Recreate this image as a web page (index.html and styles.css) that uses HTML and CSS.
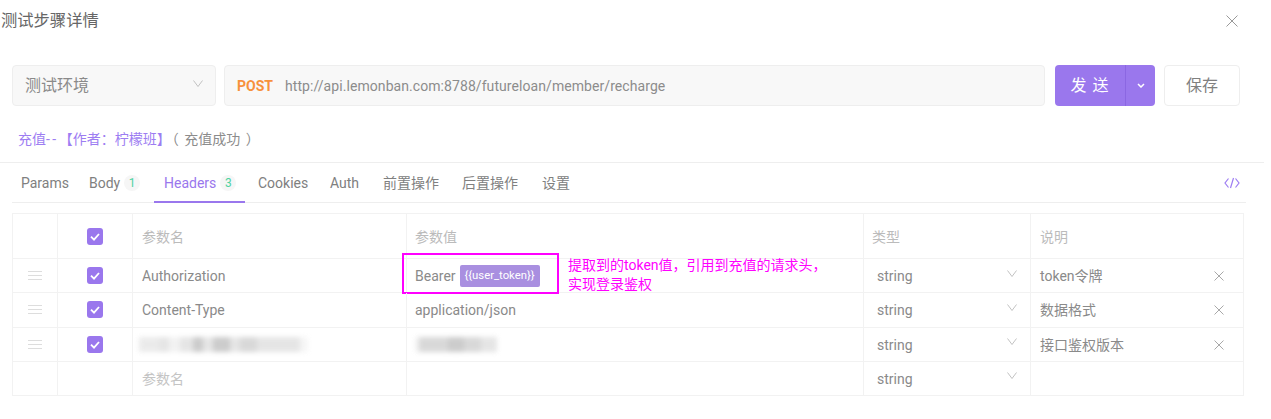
FILE: index.html
```html
<!DOCTYPE html>
<html lang="zh">
<head>
<meta charset="utf-8">
<title>测试步骤详情</title>
<link rel="stylesheet" href="styles.css">
</head>
<body>
<header class="title-bar">
  <h1 class="title">测试步骤详情</h1>
  <svg class="close" viewBox="0 0 12 12"><path d="M.5.5l11 11M11.500.5l-11 11"/></svg>
</header>
<section class="request">
  <div class="env"><span>测试环境</span><svg class="chev" viewBox="0 0 10 7"><path d="M.5.5L5 6.500 9.500.5"/></svg></div>
  <div class="url"><b class="method">POST</b><span class="address">http://api.lemonban.com:8788/futureloan/member/recharge</span></div>
  <div class="send"><span class="send-label">发 送</span><span class="send-more"><svg viewBox="0 0 8 5"><path d="M1 1l3 3 3-3"/></svg></span></div>
  <div class="save">保存</div>
</section>
<p class="desc"><span class="desc-name">充值<span class="dash">--</span>【作者：柠檬班】</span><span class="desc-state">（ 充值成功 ）</span></p>
<nav class="tabs">
  <span class="tab t1">Params</span>
  <span class="tab t2">Body<i class="count">1</i></span>
  <span class="tab t3 active">Headers<i class="count">3</i></span>
  <span class="tab t4">Cookies</span>
  <span class="tab t5">Auth</span>
  <span class="tab t6">前置操作</span>
  <span class="tab t7">后置操作</span>
  <span class="tab t8">设置</span>
  <svg class="code" viewBox="0 0 16 12"><path d="M4.500 1.500L1 6l3.500 4.500M11.500 1.500L15 6l-3.500 4.500M9.500 1L6.500 11"/></svg>
</nav>
<section class="grid">
  <div class="row head">
    <div class="cell"></div>
    <div class="cell center"><span class="check"><svg viewBox="0 0 16 17"><path d="M4 8.700l3 3 5-5.700"/></svg></span></div>
    <div class="cell name">参数名</div>
    <div class="cell value">参数值</div>
    <div class="cell type">类型</div>
    <div class="cell note">说明</div>
  </div>
  <div class="row">
    <div class="cell center"><span class="drag"></span></div>
    <div class="cell center"><span class="check"><svg viewBox="0 0 16 17"><path d="M4 8.700l3 3 5-5.700"/></svg></span></div>
    <div class="cell name">Authorization</div>
    <div class="cell value">Bearer<span class="tag">{{user_token}}</span>
      <span class="mark"></span>
      <span class="remark">提取到的token值，引用到充值的请求头，<br>实现登录鉴权</span>
    </div>
    <div class="cell type">string<svg class="chev" viewBox="0 0 10 7"><path d="M.5.5L5 6.500 9.500.5"/></svg></div>
    <div class="cell note">token令牌<svg class="del" viewBox="0 0 10 10"><path d="M.5.5l9 9M9.500.5l-9 9"/></svg></div>
  </div>
  <div class="row">
    <div class="cell center"><span class="drag"></span></div>
    <div class="cell center"><span class="check"><svg viewBox="0 0 16 17"><path d="M4 8.700l3 3 5-5.700"/></svg></span></div>
    <div class="cell name">Content-Type</div>
    <div class="cell value">application/json</div>
    <div class="cell type">string<svg class="chev" viewBox="0 0 10 7"><path d="M.5.5L5 6.500 9.500.5"/></svg></div>
    <div class="cell note">数据格式<svg class="del" viewBox="0 0 10 10"><path d="M.5.5l9 9M9.500.5l-9 9"/></svg></div>
  </div>
  <div class="row">
    <div class="cell center"><span class="drag"></span></div>
    <div class="cell center"><span class="check"><svg viewBox="0 0 16 17"><path d="M4 8.700l3 3 5-5.700"/></svg></span></div>
    <div class="cell name"><span class="blur blur-name"></span></div>
    <div class="cell value"><span class="blur blur-value"></span></div>
    <div class="cell type">string<svg class="chev" viewBox="0 0 10 7"><path d="M.5.5L5 6.500 9.500.5"/></svg></div>
    <div class="cell note">接口鉴权版本<svg class="del" viewBox="0 0 10 10"><path d="M.5.5l9 9M9.500.5l-9 9"/></svg></div>
  </div>
  <div class="row">
    <div class="cell"></div>
    <div class="cell"></div>
    <div class="cell name hint">参数名</div>
    <div class="cell value"></div>
    <div class="cell type">string<svg class="chev" viewBox="0 0 10 7"><path d="M.5.5L5 6.500 9.500.5"/></svg></div>
    <div class="cell note"></div>
  </div>
</section>
</body>
</html>
```
FILE: styles.css
```css
* { box-sizing: border-box; }
html, body { margin: 0; padding: 0; background: #fff; }
body {
  width: 1271px;
  height: 419px;
  overflow: hidden;
  font: 14px/20px Roboto, "Noto Sans CJK SC", sans-serif;
  color: #8a8a8a;
}
svg { fill: none; stroke: currentColor; display: block; }

.title-bar { height: 42px; padding: 0 33px 0 1px; display: flex; align-items: center; justify-content: space-between; }
.title { margin: 0; font-size: 16.300px; font-weight: 400; color: #666; }
.close { width: 12px; height: 12px; color: #999; stroke-width: 1; }

.request { margin-top: 23px; height: 41px; display: flex; padding: 0 31px 0 12px; }
.env {
  width: 204px; margin-right: 8px; padding: 1px 12px 0;
  display: flex; align-items: center; justify-content: space-between;
  background: #f8f8f8; border: 1px solid #eee; border-radius: 4px;
  font-size: 16px; color: #8a8a8a;
}
.chev { width: 10px; height: 7px; color: #bbb; stroke-width: .9; margin-bottom: 6px; flex: none; }
.url {
  flex: 1; padding: 0 12px; display: flex; align-items: center; gap: 12px;
  background: #f8f8f8; border: 1px solid #eee; border-radius: 4px; color: #8c8c8c;
}
.address { letter-spacing: .07px; }
.method { color: #f7913c; font-weight: 700; }
.send {
  width: 100px; margin-left: 10px; display: flex; border-radius: 4px;
  background: #9a77ed; color: #fff;
}
.send-label { flex: 1; text-align: center; font-size: 16px; line-height: 41px; letter-spacing: 1px; border-right: 1px solid #8b67e2; }
.send-more { width: 29px; display: flex; align-items: center; justify-content: center; }
.send-more svg { width: 8px; height: 5px; stroke-width: 1.500; }
.save {
  width: 76px; margin-left: 9px; text-align: center; line-height: 39px;
  border: 1px solid #eee; border-radius: 4px; font-size: 16px; color: #808080;
}

.desc { margin: 23px 0 0; padding-left: 18px; height: 23px; line-height: 20px; color: #8c8c8c; }
.desc-name { color: #9d7df2; }
.dash { letter-spacing: 2.500px; }
.desc-state { margin-left: 1px; word-spacing: 2px; }

.tabs {
  position: relative; height: 41px; display: flex; align-items: center;
  margin: 10px 7px 0 0; padding: 0 24px 0 21px; border-top: 1px solid #eee;
  background: linear-gradient(#eee, #eee) 12px 100% / 1234px 1px no-repeat;
}
.tab { display: flex; align-items: center; height: 40px; color: #808080; white-space: nowrap; }
.t1 { width: 68px; }
.t2 { width: 75px; }
.t3 { width: 94px; color: #9a77ed; }
.t4 { width: 72px; }
.t5 { width: 53px; }
.t6 { width: 79px; }
.t7 { width: 80px; }
.active { position: relative; }
.active::after { content: ""; position: absolute; left: -10px; width: 91px; bottom: 0; height: 2px; background: #9a77ed; }
.count {
  width: 16px; height: 16px; margin-left: 4px; border-radius: 50%; background: #f6f6f6;
  font-style: normal; font-size: 12px; line-height: 16px; text-align: center; color: #4fd2a1;
}
.code { width: 16px; height: 12px; margin-left: auto; color: #9d7df2; stroke-width: 1.200; }

.grid { margin: 10px 27px 0 12px; border: 1px solid #f2f2f2; }
.row {
  display: grid; grid-template-columns: 44px 75px 274px 457px 167px 1fr;
  height: 34.250px; border-top: 1px solid #f2f2f2;
}
.head { height: 44px; border-top: 0; color: #bbb; }
.cell { display: flex; align-items: center; padding: 1px 9px 0; border-left: 1px solid #f2f2f2; position: relative; min-width: 0; }
.cell:first-child { border-left: 0; }
.center { justify-content: center; padding: 0; }
.value { padding-left: 8px; }
.type { padding: 1px 13px 0; justify-content: space-between; }
.head .type { padding-left: 8px; }
.note { padding: 1px 19px 0 9px; justify-content: space-between; }
.hint { color: #c4c4c4; }
.head .cell { color: #bbb; }
.check { width: 16px; height: 17px; border-radius: 3px; background: #9a77ed; display: block; color: #fff; }
.check svg { width: 16px; height: 17px; stroke-width: 1.800; }
.drag {
  width: 14px; height: 10px; margin-top: 1px;
  background: repeating-linear-gradient(#ddd 0 1.500px, transparent 1.500px 4px);
}
.del { width: 10px; height: 10px; color: #a8a8a8; }
.tag {
  margin-left: 4px; height: 22px; width: 80px; text-align: center;
  background: #a98fe0; border-radius: 2px; color: #fff; font-size: 11.300px; line-height: 22px;
}
.mark { position: absolute; left: -5px; top: -6px; width: 157px; height: 41px; border: 2px solid #f0f; }
.remark { position: absolute; left: 161px; top: -3px; width: 300px; color: #f0f; font-size: 14px; line-height: 19px; }
.blur { display: block; height: 15px; filter: blur(2.500px); opacity: .75; }
.blur-name {
  width: 169px; margin-left: -3px;
  background: linear-gradient(90deg, #e4e4e4 0 12%, #ddd 12% 18%, #eee 18% 24%, #ddd 24% 32%, #bbb 32% 38%, #ddd 38% 44%, #bbb 44% 54%, #ddd 54% 60%, #ccc 60% 70%, #ddd 70% 95%, #f3f3f3 95%);
}
.blur-value {
  width: 82px;
  background: linear-gradient(90deg, #eee 0 5%, #ccc 5% 40%, #bbb 40% 60%, #ccc 60% 80%, #ddd 80%);
}
```
